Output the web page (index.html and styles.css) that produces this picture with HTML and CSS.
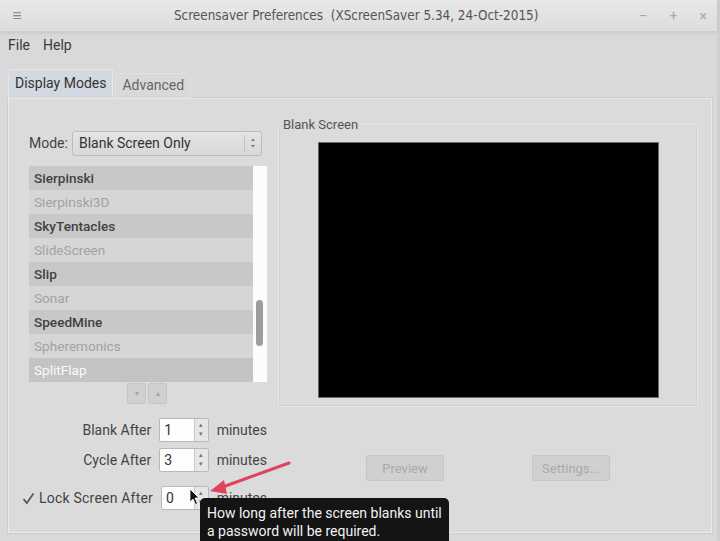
FILE: index.html
```html
<!DOCTYPE html>
<html lang="en">
<head>
    <meta charset="UTF-8">
    <title>Screensaver Preferences</title>
    <link rel="stylesheet" href="styles.css">
</head>
<body>
    <div class="window">
        <div class="titlebar">
            <span class="wm-menu">&#8801;</span>
            <span class="title">Screensaver Preferences&nbsp; (XScreenSaver 5.34, 24-Oct-2015)</span>
            <span class="wm-buttons"><span>&#8211;</span><span>+</span><span>&#215;</span></span>
        </div>
        <div class="menubar">
            <span>File</span>
            <span>Help</span>
        </div>
        <div class="tabs">
            <div class="tab active">Display Modes</div>
            <div class="tab">Advanced</div>
        </div>
        <div class="notebook">
            <div class="left-col">
                <div class="mode-row">
                    <span class="label">Mode:</span>
                    <div class="combo">
                        <span>Blank Screen Only</span>
                        <span class="combo-arrows">
                            <svg width="6" height="12" viewBox="0 0 6 12"><path d="M1 4 L3 1.5 L5 4 Z M1 8 L3 10.5 L5 8 Z" fill="#777"/></svg>
                        </span>
                    </div>
                </div>
                <div class="list">
                    <div class="rows">
                        <div class="row dark">Sierpinski</div>
                        <div class="row light">Sierpinski3D</div>
                        <div class="row dark">SkyTentacles</div>
                        <div class="row light">SlideScreen</div>
                        <div class="row dark">Slip</div>
                        <div class="row light">Sonar</div>
                        <div class="row dark">SpeedMine</div>
                        <div class="row light">Spheremonics</div>
                        <div class="row selected">SplitFlap</div>
                    </div>
                    <div class="scrollbar"><div class="thumb"></div></div>
                </div>
                <div class="list-buttons">
                    <button class="small-btn">&#9662;</button>
                    <button class="small-btn">&#9652;</button>
                </div>
                <div class="timing">
                    <div class="timing-row">
                        <div class="t-label">Blank After</div>
                        <div class="spin"><span class="spin-val">1</span><span class="spin-arrows">&#9652;<br>&#9662;</span></div>
                        <span class="unit">minutes</span>
                    </div>
                    <div class="timing-row">
                        <div class="t-label">Cycle After</div>
                        <div class="spin"><span class="spin-val">3</span><span class="spin-arrows">&#9652;<br>&#9662;</span></div>
                        <span class="unit">minutes</span>
                    </div>
                    <div class="timing-row lock">
                        <div class="t-label">
                            <svg class="check" width="13" height="13" viewBox="0 0 13 13"><path d="M1.5 7 L4.8 11 L11.5 1.5" fill="none" stroke="#555" stroke-width="1.7"/></svg>
                            <span class="lock-text">Lock Screen After</span>
                        </div>
                        <div class="spin"><span class="spin-val">0</span><span class="spin-arrows">&#9652;<br>&#9662;</span></div>
                        <span class="unit">minutes</span>
                    </div>
                </div>
            </div>
            <div class="right-col">
                <fieldset class="frame">
                    <legend>Blank Screen</legend>
                    <div class="preview-screen"></div>
                </fieldset>
                <div class="frame-buttons">
                    <button class="btn" disabled>Preview</button>
                    <button class="btn" disabled>Settings...</button>
                </div>
            </div>
        </div>
    </div>

    <!-- annotation overlays -->
    <svg class="arrow" width="100" height="50" viewBox="0 0 100 50">
        <line x1="89" y1="3" x2="20" y2="28" stroke="#e0435c" stroke-width="3" stroke-linecap="round"/>
        <path d="M10 31 L24 20 L27 34 Z" fill="#e0435c"/>
    </svg>
    <svg class="cursor" width="12" height="18" viewBox="0 0 12 18">
        <path d="M1 1 L1 14 L4 11 L6.5 16.5 L8.5 15.5 L6 10 L10 10 Z" fill="#111" stroke="#fff" stroke-width="0.8"/>
    </svg>
    <div class="tooltip">How long after the screen blanks until<br>a password will be required.</div>
</body>
</html>
```

FILE: styles.css
```css
body {
    margin: 0;
    width: 720px;
    height: 541px;
    overflow: hidden;
    background: #d9d9d9;
    font-family: Roboto, 'Noto Sans', sans-serif;
    font-size: 14px;
    color: #3a3a3a;
    position: relative;
}
.window {
    height: 541px;
    border-right: 3px solid #cfcfcf;
    box-sizing: border-box;
}
.titlebar {
    height: 32px;
    display: flex;
    align-items: center;
    background: linear-gradient(#e8e8e8, #dddddd);
    border-bottom: 1px solid #cdcdcd;
    box-shadow: 0 1px 3px rgba(0,0,0,0.08);
    position: relative;
    box-sizing: border-box;
}
.wm-menu {
    width: 34px;
    text-align: center;
    color: #888;
    font-size: 16px;
}
.title {
    flex: 1;
    text-align: center;
    font-family: 'DejaVu Sans Condensed', 'DejaVu Sans', sans-serif;
    font-size: 13.4px;
    color: #555;
    padding-left: 40px;
}
.wm-buttons {
    display: flex;
    gap: 22px;
    padding-right: 10px;
    color: #aaa;
    font-size: 14px;
}
.menubar {
    height: 28px;
    display: flex;
    align-items: center;
    gap: 13px;
    padding-left: 8px;
    padding-bottom: 2px;
    box-sizing: border-box;
}
.tabs {
    display: flex;
    align-items: flex-end;
    height: 38px;
    padding-left: 8px;
    gap: 2px;
}
.tab {
    height: 25px;
    padding: 0 6px 2px 6px;
    box-sizing: border-box;
    display: flex;
    align-items: center;
    color: #666;
    background: #d9d9d9;
    border: 1px solid #e2e2e2;
    border-bottom: none;
    border-radius: 2px 2px 0 0;
}
.tab.active {
    height: 29px;
    color: #333;
    background: #d3d9e0;
    border-color: #e6e6e6;
    padding-top: 0;
}
.notebook {
    margin-left: 8px;
    width: 704px;
    height: 435px;
    box-sizing: border-box;
    border: 1px solid #e9e9e9;
    box-shadow: 0 0 0 1px #cdcdcd;
    background: #dbdbdb;
    display: flex;
    gap: 11px;
    padding: 18px 0 0 20px;
}
.left-col {
    width: 238px;
    padding-top: 13px;
}
.mode-row {
    display: flex;
    align-items: center;
    gap: 4px;
    height: 26px;
}
.mode-row .label {
    color: #444;
}
.combo {
    width: 190px;
    height: 25px;
    box-sizing: border-box;
    display: flex;
    align-items: center;
    justify-content: space-between;
    padding-left: 6px;
    background: linear-gradient(#e4e4e4, #d8d8d8);
    border: 1px solid #bdbdbd;
    border-radius: 3px;
    color: #333;
}
.combo-arrows {
    width: 16px;
    height: 17px;
    border-left: 1px solid #c4c4c4;
    display: flex;
    align-items: center;
    justify-content: center;
}
.list {
    margin-top: 10px;
    height: 216px;
    display: flex;
    font-size: 13.6px;
}
.rows {
    flex: 1;
}
.row {
    height: 24px;
    line-height: 24px;
    padding-left: 5px;
}
.row.dark {
    background: #c8c8c8;
    color: #424242;
    font-weight: 500;
}
.row.light {
    background: #d6d6d6;
    color: #a2a2a2;
}
.row.selected {
    background: #c3c3c3;
    color: #fafafa;
}
.scrollbar {
    width: 14px;
    background: #fcfcfc;
    position: relative;
}
.thumb {
    position: absolute;
    left: 3px;
    top: 134px;
    width: 7px;
    height: 46px;
    border-radius: 4px;
    background: #9d9d9d;
}
.list-buttons {
    display: flex;
    justify-content: center;
    gap: 2px;
    margin-top: 1px;
    padding-right: 2px;
}
.small-btn {
    width: 19px;
    height: 21px;
    padding: 0;
    font-size: 8px;
    color: #a5a5a5;
    background: #d0d0d0;
    border: 1px solid #c5c5c5;
    border-radius: 2px;
}
.timing {
    margin-top: 14px;
    display: flex;
    flex-direction: column;
    gap: 6px;
}
.timing-row {
    display: flex;
    align-items: center;
    height: 24px;
}
.timing-row.lock {
    margin-top: 8px;
}
.t-label {
    width: 124px;
    display: flex;
    justify-content: flex-end;
    align-items: center;
    white-space: nowrap;
    color: #444;
    margin-right: 8px;
}
.lock-text {
    letter-spacing: 0.2px;
}
.check {
    flex-shrink: 0;
    margin-right: 4px;
}
.spin {
    width: 50px;
    height: 24px;
    box-sizing: border-box;
    display: flex;
    background: #fdfdfd;
    border: 1px solid #b9b9b9;
    border-radius: 2px;
}
.spin-val {
    flex: 1;
    padding-left: 4px;
    line-height: 22px;
    color: #333;
}
.spin-arrows {
    width: 13px;
    background: #e6e6e6;
    border-left: 1px solid #c9c9c9;
    font-size: 7px;
    line-height: 9px;
    text-align: center;
    color: #777;
    padding-top: 2px;
}
.unit {
    margin-left: 8px;
    color: #444;
}
.right-col {
    width: 420px;
}
.frame {
    margin: 0;
    padding: 10px 0 7px 0;
    height: 290px;
    box-sizing: border-box;
    border: 1px solid #e6e6e6;
    box-shadow: inset 0 0 0 1px #d2d2d2;
    border-radius: 2px;
}
.frame legend {
    margin-left: 1px;
    padding: 0 3px;
    font-size: 13px;
    color: #555;
}
.preview-screen {
    width: 341px;
    height: 256px;
    margin: 0 auto;
    background: #000;
    border: 1px solid #6b6b6b;
    box-sizing: border-box;
}
.frame-buttons {
    margin-top: 48px;
    display: flex;
    justify-content: space-evenly;
}
.btn {
    width: 78px;
    height: 26px;
    font-family: Roboto, sans-serif;
    font-size: 13px;
    color: #a9a9a9;
    background: #d0d0d0;
    border: 1px solid #c6c6c6;
    border-radius: 2px;
}
.arrow {
    position: absolute;
    left: 200px;
    top: 460px;
}
.cursor {
    position: absolute;
    left: 189px;
    top: 488px;
}
.tooltip {
    position: absolute;
    left: 200px;
    top: 498px;
    width: 249px;
    height: 50px;
    box-sizing: border-box;
    padding: 6px 7px;
    background: #141414;
    border-radius: 5px;
    color: #f2f2f2;
    font-size: 14px;
    line-height: 18px;
    white-space: nowrap;
}
```
